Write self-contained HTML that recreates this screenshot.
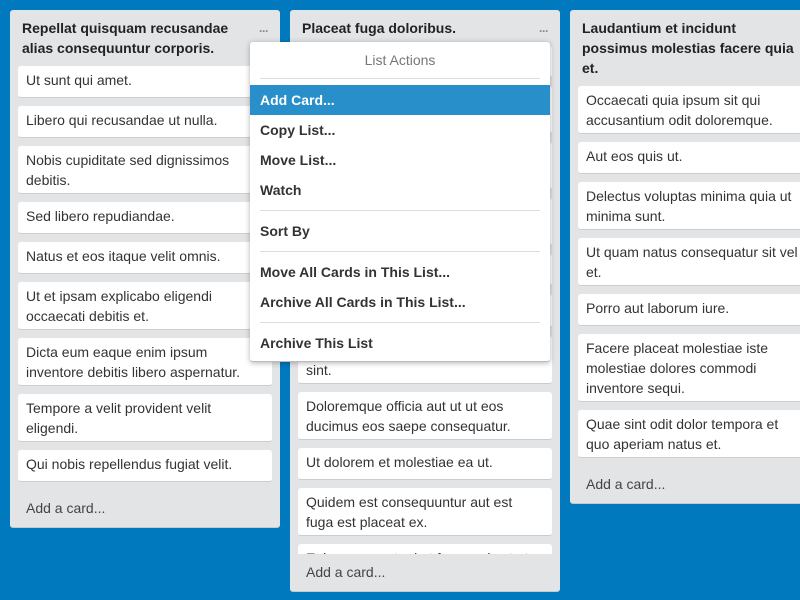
<!DOCTYPE html>
<html><head><meta charset="utf-8"><style>
*{box-sizing:border-box;margin:0;padding:0}
body{width:800px;height:600px;background:#0079bf;font-family:"Liberation Sans",sans-serif;font-size:14px;color:#333;position:relative;overflow:hidden}
.list{position:absolute;top:10px;width:270px;background:#e2e4e6;border-radius:3px;border-bottom:1px solid #c4c9cc}
.title{font-weight:bold;line-height:20px;padding:8px 40px 0 12px;color:#222;min-height:56px}
.dots{position:absolute;right:12px;top:14px;color:#888;font-size:12px;letter-spacing:-1px;font-weight:bold}
.cards{padding:0 8px;overflow:hidden}
.card{background:#fff;border-radius:3px;border-bottom:1px solid #ccc;padding:4px 18px 3px 8px;min-height:32px;line-height:20px;margin-bottom:8px;color:#333}
.add{padding:8px 16px 9px;line-height:20px;color:#444}
.menu{position:absolute;left:250px;top:42px;width:300px;height:320px;background:#fff;border-radius:3px;box-shadow:0 1px 6px rgba(0,0,0,.3);border-bottom:1px solid #bbb}
.mh{text-align:center;color:#777;line-height:36px;height:37px;margin:0 10px;border-bottom:1px solid #ddd}
.mi{font-weight:bold;line-height:30px;height:30px;padding-left:10px;color:#333}
.hl{background:#298fca;color:#fff;margin-top:6px}
.sep{height:1px;background:#ddd;margin:5px 10px}
</style></head><body>
<div class="list" style="left:10px">
<div class="title" style="min-height:56px">Repellat quisquam recusandae alias consequuntur corporis.</div><div class="dots">···</div>
<div class="cards">
<div class="card">Ut sunt qui amet.</div>
<div class="card">Libero qui recusandae ut nulla.</div>
<div class="card">Nobis cupiditate sed dignissimos debitis.</div>
<div class="card">Sed libero repudiandae.</div>
<div class="card">Natus et eos itaque velit omnis.</div>
<div class="card">Ut et ipsam explicabo eligendi occaecati debitis et.</div>
<div class="card">Dicta eum eaque enim ipsum inventore debitis libero aspernatur.</div>
<div class="card">Tempore a velit provident velit eligendi.</div>
<div class="card">Qui nobis repellendus fugiat velit.</div>
</div>
<div class="add">Add a card...</div>
</div>

<div class="list" style="left:290px">
<div class="title" style="min-height:36px">Placeat fuga doloribus.</div><div class="dots">···</div>
<div class="cards" style="height:508px">
<div class="card">Aut et voluptas sed qui harum dolor.</div>
<div class="card">Voluptatem quia nemo ipsa molestiae nisi.</div>
<div class="card">Et rerum quo nesciunt ipsum harum voluptatem.</div>
<div class="card">Est eos quia quae porro dolores amet.</div>
<div class="card">Quo est illum.</div>
<div class="card" style="min-height:34px">Nam et quia.</div>
<div class="card">Qui omnis dolore aperiam voluptas sint.</div>
<div class="card">Doloremque officia aut ut ut eos ducimus eos saepe consequatur.</div>
<div class="card">Ut dolorem et molestiae ea ut.</div>
<div class="card">Quidem est consequuntur aut est fuga est placeat ex.</div>
<div class="card">Et harum amet ad et fugar vel est ut.</div>
</div>
<div class="add">Add a card...</div>
</div>

<div class="list" style="left:570px">
<div class="title" style="min-height:76px">Laudantium et incidunt possimus molestias facere quia et.</div>
<div class="cards">
<div class="card">Occaecati quia ipsum sit qui accusantium odit doloremque.</div>
<div class="card">Aut eos quis ut.</div>
<div class="card">Delectus voluptas minima quia ut minima sunt.</div>
<div class="card">Ut quam natus consequatur sit vel et.</div>
<div class="card">Porro aut laborum iure.</div>
<div class="card">Facere placeat molestiae iste molestiae dolores commodi inventore sequi.</div>
<div class="card">Quae sint odit dolor tempora et<br>quo aperiam natus et.</div>
</div>
<div class="add">Add a card...</div>
</div>

<div class="menu">
<div class="mh">List Actions</div>
<div class="mi hl">Add Card...</div>
<div class="mi">Copy List...</div>
<div class="mi">Move List...</div>
<div class="mi">Watch</div>
<div class="sep"></div>
<div class="mi">Sort By</div>
<div class="sep"></div>
<div class="mi">Move All Cards in This List...</div>
<div class="mi">Archive All Cards in This List...</div>
<div class="sep"></div>
<div class="mi">Archive This List</div>
</div>
</body></html>
